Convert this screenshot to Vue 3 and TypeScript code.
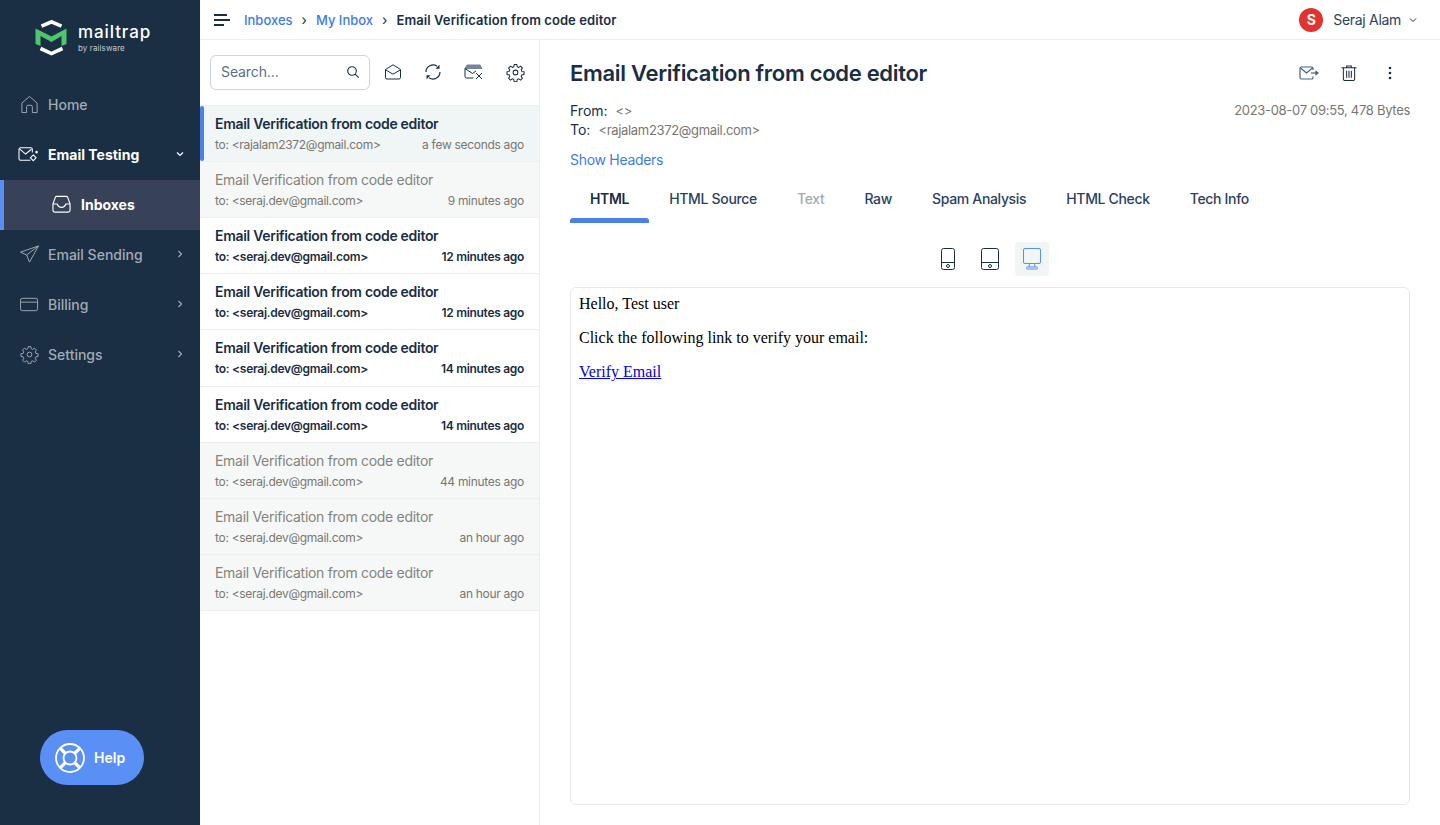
<template>
  <div class="app">
    <aside class="sidebar">
      <div class="logo">
        <svg class="logo-mark" width="32" height="36" viewBox="0 0 32 36" fill="none">
          <path d="M6.500 6.200 16.500 1.800 26.500 6.200" stroke="#fff" stroke-width="3.600" />
          <path d="M5.500 28.500 16.500 33.600 27.500 28.500" stroke="#fff" stroke-width="3.600" />
          <path d="M.5 8.500 16.500 16.500 31.500 8.500V24l-5 2V16l-10 6-11-6V26l-5-2z" fill="#4fc66e" />
        </svg>
        <div class="logo-text">
          <span class="logo-name">mailtrap</span>
          <span class="logo-by">by railsware</span>
        </div>
      </div>
      <nav class="nav">
        <a class="nav-item">
          <svg class="nav-icon" viewBox="0 0 20 20" fill="none" stroke="currentColor" stroke-width="1">
            <path d="M2 8.500 10 1.500l8 7V18.500h-5v-6.200a1.500 1.500 0 0 0-1.500-1.500h-3A1.500 1.500 0 0 0 7 12.300v6.200H2z" stroke-linejoin="round" />
          </svg>
          <span>Home</span>
        </a>
        <a class="nav-item active-parent">
          <svg class="nav-icon wide" viewBox="0 0 22 20" fill="none" stroke="currentColor" stroke-width="1.100">
            <path d="M13 16H2.500A1.500 1.500 0 0 1 1 14.500v-10A1.500 1.500 0 0 1 2.500 3h11A1.500 1.500 0 0 1 15 4.500V8" />
            <path d="m1.500 4 6.500 5.500L14 4.500" />
            <path d="m16 10.500 3 3-3 3-3-3z" />
            <circle cx="19.500" cy="7.500" r=".8" />
          </svg>
          <span>Email Testing</span>
          <svg class="chev" viewBox="0 0 10 10" fill="none" stroke="currentColor" stroke-width="1.200"><path d="m2 3.500 3 3 3-3" /></svg>
        </a>
        <a class="nav-item sub">
          <svg class="nav-icon inbox" viewBox="0 0 20 20" fill="none" stroke="currentColor" stroke-width="1.200">
            <path d="M1 9.500 3.500 2.500A1.500 1.500 0 0 1 5 1.500h10a1.500 1.500 0 0 1 1.500 1L19 9.500v6.500a2 2 0 0 1-2 2H3a2 2 0 0 1-2-2z" />
            <path d="M1 9.500h4.500c1 3 2.500 3.500 4.500 3.500s3.500-.5 4.500-3.500H19" />
          </svg>
          <span>Inboxes</span>
        </a>
        <a class="nav-item">
          <svg class="nav-icon" viewBox="0 0 20 20" fill="none" stroke="currentColor" stroke-width="1">
            <path d="M19.500 1 .5 7.500l6.500 3 3 7.500zM19.500 1 7 10.500" stroke-linejoin="round" />
          </svg>
          <span>Email Sending</span>
          <svg class="chev" viewBox="0 0 10 10" fill="none" stroke="currentColor" stroke-width="1.200"><path d="m3.500 2 3 3-3 3" /></svg>
        </a>
        <a class="nav-item">
          <svg class="nav-icon" viewBox="0 0 20 20" fill="none" stroke="currentColor" stroke-width="1">
            <rect x=".5" y="3.500" width="18" height="13" rx="2" />
            <path d="M.5 7.500h18" />
          </svg>
          <span>Billing</span>
          <svg class="chev" viewBox="0 0 10 10" fill="none" stroke="currentColor" stroke-width="1.200"><path d="m3.500 2 3 3-3 3" /></svg>
        </a>
        <a class="nav-item">
          <svg class="nav-icon" viewBox="0 0 24 24" fill="none" stroke="currentColor" stroke-width="1.200">
            <circle cx="12" cy="12" r="3" />
            <path :d="gearPath" stroke-linejoin="round" />
          </svg>
          <span>Settings</span>
          <svg class="chev" viewBox="0 0 10 10" fill="none" stroke="currentColor" stroke-width="1.200"><path d="m3.500 2 3 3-3 3" /></svg>
        </a>
      </nav>
      <button class="help">
        <svg width="30" height="30" viewBox="0 0 30 30" fill="none" stroke="#fff" stroke-width="1.800">
          <circle cx="15" cy="15" r="14" />
          <circle cx="15" cy="15" r="6.500" />
          <path d="M5.600 4.600 11 10M4.600 5.600 10 11M24.400 4.600 19 10M25.400 5.600 20 11M5.600 25.400 11 20M4.600 24.400 10 19M24.400 25.400 19 20M25.400 24.400 20 19" />
        </svg>
        <span>Help</span>
      </button>
    </aside>

    <div class="main">
      <header class="topbar">
        <svg class="burger" width="16" height="12" viewBox="0 0 16 12" stroke="#1a2e44" stroke-width="1.800">
          <path d="M0 1h13M0 6h16M0 11h10" />
        </svg>
        <a class="crumb">Inboxes</a>
        <span class="sep">›</span>
        <a class="crumb">My Inbox</a>
        <span class="sep">›</span>
        <span class="crumb-current">Email Verification from code editor</span>
        <div class="user">
          <span class="avatar">S</span>
          <span class="user-name">Seraj Alam</span>
          <svg class="user-chev" width="10" height="10" viewBox="0 0 10 10" fill="none" stroke="#1a2e44" stroke-width="1"><path d="m2 3.500 3 3 3-3" /></svg>
        </div>
      </header>

      <div class="content">
        <section class="list-pane">
          <div class="toolbar">
            <div class="search">
              <span class="search-ph">Search...</span>
              <svg width="14" height="14" viewBox="0 0 14 14" fill="none" stroke="#1a2e44" stroke-width="1.100">
                <circle cx="6" cy="6" r="4.300" />
                <path d="m9.200 9.200 3.500 3.500" />
              </svg>
            </div>
            <div class="tool-icons">
              <svg width="18" height="18" viewBox="0 0 18 18" fill="none" stroke="#1a2e44" stroke-width="1">
                <path d="M1.500 6.500 9 1.800l7.500 4.700v8a1.500 1.500 0 0 1-1.500 1.500H3a1.500 1.500 0 0 1-1.500-1.500z" stroke-linejoin="round" />
                <path d="m1.500 6.800 7.500 4.400 7.500-4.400" />
              </svg>
              <svg width="18" height="18" viewBox="0 0 18 18" fill="none" stroke="#1a2e44" stroke-width="1.200">
                <path d="M2 9A7 7 0 0 1 13 3.300M16 9A7 7 0 0 1 5 14.700" />
                <path d="M15.500 1.800v4h-4z" fill="#1a2e44" stroke="none" />
                <path d="M2.500 16.200v-4h4z" fill="#1a2e44" stroke="none" />
              </svg>
              <svg width="20" height="18" viewBox="0 0 20 18" fill="none" stroke="#1a2e44" stroke-width="1">
                <path d="M1 5.500 3 2h13l2 3.500H1z" fill="#76869a" stroke="#76869a" />
                <path d="M9.500 15H2.500A1.500 1.500 0 0 1 1 13.500v-8l7.500 5 3.500-2.500" />
                <path d="m12 10 6 6M18 10l-6 6" />
              </svg>
              <svg width="19" height="19" viewBox="0 0 24 24" fill="none" stroke="#1a2e44" stroke-width="1.300">
                <circle cx="12" cy="12" r="3" />
                <path :d="gearPath" stroke-linejoin="round" />
              </svg>
            </div>
          </div>
          <div class="messages">
            <div
              v-for="(m, i) in messages"
              :key="i"
              class="msg"
              :class="{ unread: m.unread, selected: m.selected }"
            >
              <div class="msg-title">Email Verification from code editor</div>
              <div class="msg-meta">
                <span>to: &lt;{{ m.to }}&gt;</span>
                <span>{{ m.time }}</span>
              </div>
            </div>
          </div>
        </section>

        <section class="detail">
          <div class="detail-head">
            <h1 class="detail-title">Email Verification from code editor</h1>
            <div class="detail-actions">
              <svg width="20" height="14" viewBox="0 0 20 14" fill="none" stroke="#47617f" stroke-width="1.200">
                <path d="M14 10.500V11.500a1.500 1.500 0 0 1-1.500 1.500h-10A1.500 1.500 0 0 1 1 11.500V2.500A1.500 1.500 0 0 1 2.500 1h10A1.500 1.500 0 0 1 14 2.500V4" />
                <path d="m1.500 2 6 5 6-5" />
                <path d="M12 7h6" />
                <path d="m17 5.500 2 1.500-2 1.500z" fill="#47617f" />
              </svg>
              <svg width="16" height="16" viewBox="0 0 16 17" fill="none" stroke="#1a2e44" stroke-width="1.100">
                <path d="M0 3h16M5.500 3V1h5v2" />
                <path d="M2 3v12a1.500 1.500 0 0 0 1.500 1.500h9A1.500 1.500 0 0 0 14 15V3" />
                <path d="M5.500 6v7.500M8 6v7.500M10.500 6v7.500" />
              </svg>
              <svg class="dots" width="4" height="14" viewBox="0 0 4 14" fill="#1a2e44">
                <circle cx="2" cy="2" r="1.300" />
                <circle cx="2" cy="7" r="1.300" />
                <circle cx="2" cy="12" r="1.300" />
              </svg>
            </div>
          </div>

          <div class="addr-block">
            <div class="addr-lines">
              <div class="addr"><span class="addr-label">From:</span><span class="addr-val">&lt;&gt;</span></div>
              <div class="addr"><span class="addr-label">To:</span><span class="addr-val">&lt;rajalam2372@gmail.com&gt;</span></div>
            </div>
            <div class="stamp">2023-08-07 09:55, 478 Bytes</div>
          </div>

          <a class="show-headers">Show Headers</a>

          <div class="tabs">
            <span
              v-for="t in tabs"
              :key="t.label"
              class="tab"
              :class="{ active: t.active, disabled: t.disabled }"
            >{{ t.label }}</span>
          </div>

          <div class="devices">
            <button class="device">
              <svg width="14" height="22" viewBox="0 0 14 22" fill="none" stroke="#1a2e44" stroke-width="1">
                <rect x=".5" y=".5" width="13" height="21" rx="2" />
                <path d="M.5 14.500h13" />
                <circle cx="7" cy="18" r="1.500" />
              </svg>
            </button>
            <button class="device">
              <svg width="18" height="22" viewBox="0 0 18 22" fill="none" stroke="#1a2e44" stroke-width="1">
                <rect x=".5" y=".5" width="17" height="21" rx="2" />
                <path d="M.5 14.500h17" />
                <circle cx="9" cy="18" r="1.500" />
              </svg>
            </button>
            <button class="device on">
              <svg width="18" height="22" viewBox="0 0 18 22" fill="none" stroke="#5a8ff5" stroke-width="1">
                <rect x=".5" y=".5" width="17" height="15" rx="1.500" />
                <path d="M6.500 15.500 6 19M11.500 15.500 12 19" />
                <rect x="3.500" y="19" width="11" height="2" rx="1" />
              </svg>
            </button>
          </div>

          <div class="preview">
            <p>Hello, Test user</p>
            <p>Click the following link to verify your email:</p>
            <p><a class="verify">Verify Email</a></p>
          </div>
        </section>
      </div>
    </div>
  </div>
</template>

<script setup lang="ts">
interface Message {
  to: string
  time: string
  unread?: boolean
  selected?: boolean
}

const gearPath =
  'M10.300 2h3.400l.5 2.800 1.900.8 2.300-1.600 2.400 2.400-1.600 2.300.8 1.900 2.800.5v3.400l-2.800.5-.8 1.900 1.600 2.300-2.400 2.400-2.300-1.600-1.900.8-.5 2.800h-3.400l-.5-2.800-1.900-.8-2.300 1.600-2.400-2.400 1.600-2.300-.8-1.900-2.800-.5v-3.400l2.800-.5.8-1.900-1.600-2.300 2.400-2.400 2.300 1.600 1.900-.8z'

const messages: Message[] = [
  { to: 'rajalam2372@gmail.com', time: 'a few seconds ago', selected: true },
  { to: 'seraj.dev@gmail.com', time: '9 minutes ago' },
  { to: 'seraj.dev@gmail.com', time: '12 minutes ago', unread: true },
  { to: 'seraj.dev@gmail.com', time: '12 minutes ago', unread: true },
  { to: 'seraj.dev@gmail.com', time: '14 minutes ago', unread: true },
  { to: 'seraj.dev@gmail.com', time: '14 minutes ago', unread: true },
  { to: 'seraj.dev@gmail.com', time: '44 minutes ago' },
  { to: 'seraj.dev@gmail.com', time: 'an hour ago' },
  { to: 'seraj.dev@gmail.com', time: 'an hour ago' }
]

const tabs = [
  { label: 'HTML', active: true },
  { label: 'HTML Source' },
  { label: 'Text', disabled: true },
  { label: 'Raw' },
  { label: 'Spam Analysis' },
  { label: 'HTML Check' },
  { label: 'Tech Info' }
]
</script>

<style>
html,
body {
  margin: 0;
  background: #fff;
}
</style>

<style scoped>
.app {
  display: flex;
  height: 825px;
  overflow: hidden;
  font-family: Inter, "Liberation Sans", sans-serif;
  color: #1a2e44;
  background: #fff;
}

.sidebar {
  width: 200px;
  flex-shrink: 0;
  display: flex;
  flex-direction: column;
  background: #1a2e44;
}

.logo {
  height: 80px;
  box-sizing: border-box;
  padding: 0 0 5px 35px;
  display: flex;
  align-items: center;
  gap: 11px;
}

.logo-text {
  display: flex;
  flex-direction: column;
  color: #fff;
}

.logo-name {
  font-size: 17px;
  line-height: 18px;
  font-weight: 500;
  letter-spacing: 0.9px;
}

.logo-by {
  margin-top: 3px;
  font-size: 8px;
  line-height: 8px;
  color: #c4cbd3;
  letter-spacing: 0.1px;
}

.nav {
  display: flex;
  flex-direction: column;
}

.nav-item {
  height: 50px;
  box-sizing: border-box;
  padding: 0 15px 2px 20px;
  display: flex;
  align-items: center;
  gap: 9px;
  font-size: 14px;
  font-weight: 500;
  color: #a3abb5;
}

.nav-icon {
  width: 19px;
  height: 19px;
  flex-shrink: 0;
  color: #a3abb5;
}

.nav-icon.wide {
  width: 21px;
  margin-left: -2px;
}

.chev {
  width: 10px;
  height: 10px;
  margin-left: auto;
}

.active-parent {
  color: #fff;
  font-weight: 700;
}

.active-parent .nav-icon {
  color: #fff;
}

.sub {
  background: #374259;
  border-left: 4px solid #5a8ff5;
  padding-left: 48px;
  gap: 10px;
  color: #fff;
  font-weight: 700;
}

.sub .nav-icon {
  color: #fff;
}

.help {
  margin: auto 0 40px 40px;
  width: 104px;
  height: 55px;
  border: none;
  border-radius: 28px;
  background: #5a8ff5;
  color: #fff;
  display: flex;
  align-items: center;
  gap: 9px;
  padding: 0 0 0 15px;
  font: 600 14px Inter, sans-serif;
}

.main {
  flex: 1;
  min-width: 0;
  display: flex;
  flex-direction: column;
}

.topbar {
  height: 40px;
  box-sizing: border-box;
  flex-shrink: 0;
  display: flex;
  align-items: center;
  padding: 0 22px 0 14px;
  border-bottom: 1px solid #eceef0;
  font-size: 13px;
}

.burger {
  margin-right: 14px;
}

.crumb {
  color: #3f7ce8;
  font-weight: 500;
}

.sep {
  margin: 0 9px;
  color: #1a2e44;
  font-size: 14px;
}

.crumb-current {
  font-weight: 600;
  letter-spacing: 0.08px;
}

.user {
  margin-left: auto;
  display: flex;
  align-items: center;
  font-size: 14px;
}

.avatar {
  width: 24px;
  height: 24px;
  border-radius: 50%;
  background: #e13430;
  color: #fff;
  font-weight: 700;
  font-size: 14px;
  display: flex;
  align-items: center;
  justify-content: center;
}

.user-name {
  margin-left: 10px;
  color: #2b4261;
  letter-spacing: -0.3px;
}

.user-chev {
  margin-left: 7px;
}

.content {
  flex: 1;
  min-height: 0;
  display: flex;
}

.list-pane {
  width: 340px;
  flex-shrink: 0;
  box-sizing: border-box;
  border-right: 1px solid #eceef0;
}

.toolbar {
  height: 66px;
  box-sizing: border-box;
  padding: 15px 14px 0 10px;
  display: flex;
  align-items: flex-start;
  border-bottom: 1px solid #eceef0;
}

.search {
  width: 160px;
  height: 35px;
  box-sizing: border-box;
  border: 1px solid #cfd4d9;
  border-radius: 6px;
  padding: 0 9px 2px 10px;
  display: flex;
  align-items: center;
  justify-content: space-between;
  font-size: 14px;
}

.search-ph {
  color: #5b6f86;
  letter-spacing: -0.1px;
}

.tool-icons {
  flex: 1;
  height: 34px;
  display: flex;
  align-items: center;
  justify-content: space-between;
  margin-left: 14px;
}

.msg {
  height: 56.11px;
  box-sizing: border-box;
  padding: 8px 15px 0 15px;
  border-bottom: 1px solid #eceef0;
  background: #f6f8f8;
  color: #85837c;
  letter-spacing: -0.3px;
}

.msg-title {
  font-size: 14px;
  line-height: 20px;
}

.msg-meta {
  display: flex;
  justify-content: space-between;
  margin-top: 2px;
  font-size: 12px;
  line-height: 17px;
  color: #79776f;
}

.unread {
  background: #fff;
}

.unread .msg-title,
.selected .msg-title {
  font-weight: 600;
  color: #1a2e44;
}

.unread .msg-meta {
  color: #1a2e44;
  font-weight: 600;
}

.selected {
  position: relative;
  background: #f0f5f6;
}

.selected::before {
  content: "";
  position: absolute;
  left: 0;
  top: 0;
  bottom: 0;
  width: 4px;
  border-radius: 2px;
  background: #4b7fe9;
}

.detail {
  flex: 1;
  min-width: 0;
  box-sizing: border-box;
  padding: 0 30px 20px;
  display: flex;
  flex-direction: column;
  letter-spacing: -0.3px;
}

.detail-head {
  height: 61px;
  flex-shrink: 0;
  padding-top: 12px;
  box-sizing: border-box;
  display: flex;
  align-items: flex-start;
  justify-content: space-between;
}

.detail-title {
  margin: 0;
  font-size: 22px;
  line-height: 42px;
  font-weight: 600;
  color: #1a2e44;
}

.detail-actions {
  display: flex;
  align-items: center;
  gap: 22px;
  height: 42px;
  padding-right: 18px;
}

.dots {
  margin-left: 9px;
}

.addr-block {
  display: flex;
  justify-content: space-between;
  align-items: flex-start;
}

.addr {
  display: flex;
  align-items: baseline;
  height: 19px;
  line-height: 19px;
  font-size: 14px;
}

.addr-label {
  margin-right: 8px;
  letter-spacing: 0;
}

.addr-val {
  font-size: 13px;
  letter-spacing: -0.32px;
  color: #79776f;
}

.stamp {
  font-size: 13px;
  line-height: 19px;
  color: #79776f;
}

.show-headers {
  margin-top: 11px;
  font-size: 14px;
  line-height: 19px;
  color: #3f7ce8;
}

.tabs {
  display: flex;
  margin-top: 13px;
  flex-shrink: 0;
}

.tab {
  position: relative;
  padding: 0 20px;
  height: 41px;
  line-height: 34px;
  box-sizing: border-box;
  font-size: 14px;
  font-weight: 500;
  letter-spacing: -0.33px;
  color: #2b4261;
}

.tab.active {
  font-weight: 600;
  color: #1a2e44;
}

.tab.active::after {
  content: "";
  position: absolute;
  left: 0;
  right: 0;
  bottom: 0;
  height: 5px;
  border-radius: 3px 3px 0 0;
  background: #4b7fe9;
}

.tab.disabled {
  color: #a3abb5;
}

.devices {
  display: flex;
  justify-content: center;
  gap: 8px;
  margin-top: 19px;
  flex-shrink: 0;
}

.device {
  width: 34px;
  height: 34px;
  padding: 0;
  border: none;
  border-radius: 4px;
  background: transparent;
  display: flex;
  align-items: center;
  justify-content: center;
}

.device.on {
  background: #f0f5f6;
}

.preview {
  flex: 1;
  margin-top: 11px;
  border: 1px solid #e6e9ec;
  border-radius: 6px;
  padding: 7px 8px;
  font-family: "Liberation Serif", serif;
  font-size: 16px;
  line-height: 18px;
  letter-spacing: 0;
  color: #000;
}

.preview p {
  margin: 0 0 16px;
}

.verify {
  color: #00e;
  text-decoration: underline;
}
</style>
